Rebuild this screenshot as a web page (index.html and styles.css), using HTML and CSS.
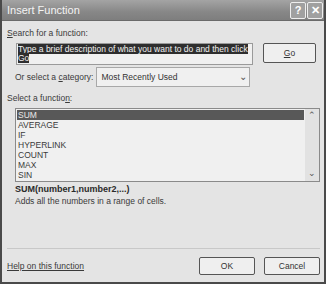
FILE: index.html
```html
<!DOCTYPE html>
<html lang="en">

<head>
    <meta charset="UTF-8">
    <link rel="stylesheet" href="styles.css">
    <title>Insert Function</title>
</head>

<body>

    <div class="window">
        <div class="titlebar">
            <span class="title">Insert Function</span>
            <div class="caption-buttons">
                <span class="cap-btn">?</span>
                <span class="cap-btn">&#x2715;</span>
            </div>
        </div>

        <div class="content">
            <div class="label"><u>S</u>earch for a function:</div>

            <div class="search-row">
                <div class="search-box">
                    <span class="selected-text">Type a brief description of what you want to do and then click Go</span>
                </div>
                <div class="button go-btn"><u>G</u>o</div>
            </div>

            <div class="category-row">
                <span class="label">Or select a <u>c</u>ategory:</span>
                <div class="select">
                    <span>Most Recently Used</span>
                    <span class="select-arrow">&#x2304;</span>
                </div>
            </div>

            <div class="label list-label">Select a functio<u>n</u>:</div>

            <div class="list">
                <div class="items">
                    <div class="item active">SUM</div>
                    <div class="item">AVERAGE</div>
                    <div class="item">IF</div>
                    <div class="item">HYPERLINK</div>
                    <div class="item">COUNT</div>
                    <div class="item">MAX</div>
                    <div class="item">SIN</div>
                </div>
                <div class="scrollbar">
                    <span class="arrow">&#x2303;</span>
                    <span class="arrow">&#x2304;</span>
                </div>
            </div>

            <div class="signature">SUM(number1,number2,...)</div>
            <div class="description">Adds all the numbers in a range of cells.</div>

            <div class="spacer"></div>
            <div class="separator"></div>

            <div class="footer">
                <a class="help-link" href="#">Help on this function</a>
                <div class="buttons">
                    <div class="button">OK</div>
                    <div class="button">Cancel</div>
                </div>
            </div>
        </div>
    </div>

</body>

</html>
```

FILE: styles.css
```css
body {
    margin: 0;
    background: #ffffff;
    font-family: "Liberation Sans", Arial, sans-serif;
    font-size: 8.5px;
    color: #333333;
}

.window {
    width: 326px;
    height: 284px;
    box-sizing: border-box;
    display: flex;
    flex-direction: column;
    background: #e4e4e4;
    border: 2px solid #4a4a4a;
    border-top: none;
}

.titlebar {
    height: 21px;
    flex-shrink: 0;
    display: flex;
    align-items: center;
    justify-content: space-between;
    padding: 0 1px 0 5px;
    background: linear-gradient(#a4a4a4, #878787 60%, #7e7e7e);
    border-bottom: 1px solid #6a6a6a;
    box-sizing: border-box;
}

.title {
    color: #f4f4f4;
    font-size: 11px;
}

.caption-buttons {
    display: flex;
    gap: 1px;
}

.cap-btn {
    width: 14px;
    height: 15px;
    display: flex;
    align-items: center;
    justify-content: center;
    background: #a0a0a0;
    border: 1px solid #eeeeee;
    border-radius: 2px;
    color: #ffffff;
    font-size: 11px;
    font-weight: bold;
}

.content {
    flex: 1;
    display: flex;
    flex-direction: column;
    padding: 7px 4px 7px 5px;
}

.label {
    line-height: 10px;
    color: #3a3a3a;
}

.search-row {
    display: flex;
    align-items: flex-start;
    margin-top: 5px;
}

.search-box {
    width: 237px;
    height: 22px;
    margin-left: 9px;
    box-sizing: border-box;
    padding: 1px 1px;
    background: #f0f0f0;
    border: 1px solid #9a9a9a;
    line-height: 9px;
}

.selected-text {
    background: #2e2e2e;
    color: #f2f2f2;
}

.button {
    display: flex;
    align-items: center;
    justify-content: center;
    box-sizing: border-box;
    background: #efefef;
    border: 1px solid #555555;
    border-radius: 2px;
    color: #333333;
}

.go-btn {
    width: 53px;
    height: 20px;
    margin-left: 10px;
}

.category-row {
    display: flex;
    align-items: center;
    margin-top: 2px;
    padding-left: 8px;
}

.select {
    width: 154px;
    height: 20px;
    margin-left: 3px;
    box-sizing: border-box;
    display: flex;
    align-items: center;
    justify-content: space-between;
    padding: 0 2px 0 4px;
    background: #f0f0f0;
    border: 1px solid #a8a8a8;
}

.select-arrow {
    font-size: 10px;
    color: #555555;
    line-height: 10px;
}

.list-label {
    margin-top: 6px;
}

.list {
    display: flex;
    height: 74px;
    margin-top: 5px;
    margin-left: 8px;
    box-sizing: border-box;
    background: #f0f0f0;
    border: 1px solid #8a8a8a;
}

.items {
    flex: 1;
    padding: 1px 1px 0 1px;
}

.item {
    height: 10px;
    line-height: 10px;
    padding-left: 1px;
    color: #3a3a3a;
}

.item.active {
    background: #585858;
    color: #e8e8e8;
}

.scrollbar {
    width: 14px;
    display: flex;
    flex-direction: column;
    justify-content: space-between;
    align-items: center;
    background: #e2e2e2;
    padding: 2px 0 4px;
}

.arrow {
    font-size: 9px;
    line-height: 8px;
    color: #555555;
}

.signature {
    margin-top: 2px;
    margin-left: 8px;
    font-size: 9px;
    font-weight: bold;
    line-height: 11px;
    color: #2a2a2a;
}

.description {
    margin-top: 1px;
    margin-left: 8px;
    line-height: 10px;
    color: #3a3a3a;
}

.spacer {
    flex: 1;
}

.separator {
    height: 0;
    border-top: 1px solid #c8c8c8;
    margin: 0 0 8px 0;
}

.footer {
    display: flex;
    align-items: center;
    justify-content: space-between;
}

.help-link {
    color: #3a3a3a;
    text-decoration: underline;
}

.buttons {
    display: flex;
    gap: 9px;
}

.buttons .button {
    width: 56px;
    height: 18px;
}
```
